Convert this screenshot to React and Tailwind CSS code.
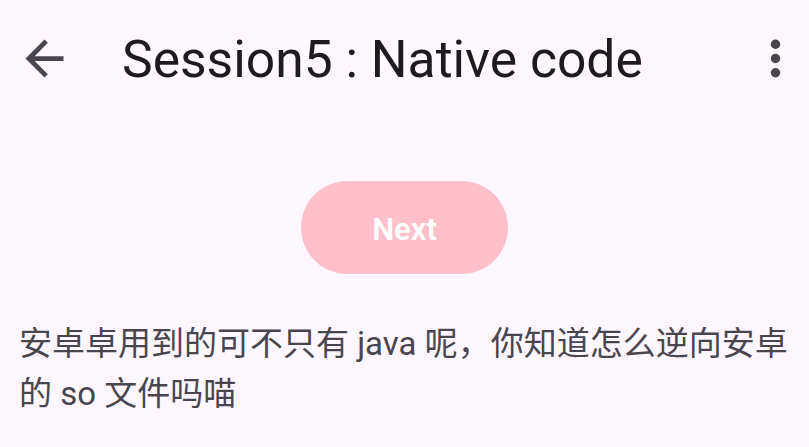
import React from 'react';

const ArrowBack = () => (
  <svg width="57" height="57" viewBox="0 0 24 24" fill="#49454F">
    <path d="M20 11H7.83l5.59-5.59L12 4l-8 8 8 8 1.41-1.41L7.83 13H20v-2z" />
  </svg>
);

const MoreVert = () => (
  <svg width="57" height="57" viewBox="0 0 24 24" fill="#49454F">
    <circle cx="12" cy="6" r="2" />
    <circle cx="12" cy="12" r="2" />
    <circle cx="12" cy="18" r="2" />
  </svg>
);

const App = () => {
  return (
    <div className="w-[809px] h-[447px] overflow-hidden bg-[#fef7ff] font-['Roboto','Noto_Sans_CJK_SC',sans-serif]">
      {/* top app bar */}
      <div className="flex items-center h-[117px]">
        <div className="ml-[16px] shrink-0">
          <ArrowBack />
        </div>
        <h1 className="ml-[49px] pt-[2px] flex-1 text-[51.6px] leading-none text-[#1d1b20] whitespace-nowrap">
          Session5 : Native code
        </h1>
        <div className="mr-[5px] shrink-0">
          <MoreVert />
        </div>
      </div>

      <div className="flex justify-center mt-[64px]">
        <button className="w-[207px] h-[93px] pt-[6px] rounded-full bg-[#ffc0cb] text-white text-[31px] font-semibold">
          Next
        </button>
      </div>

      <p className="mt-[45px] px-[19px] text-[33px] leading-[50px] text-[#49454f]">
        安卓卓用到的可不只有 java 呢，你知道怎么逆向安卓的 so 文件吗喵
      </p>
    </div>
  );
};

export default App;
